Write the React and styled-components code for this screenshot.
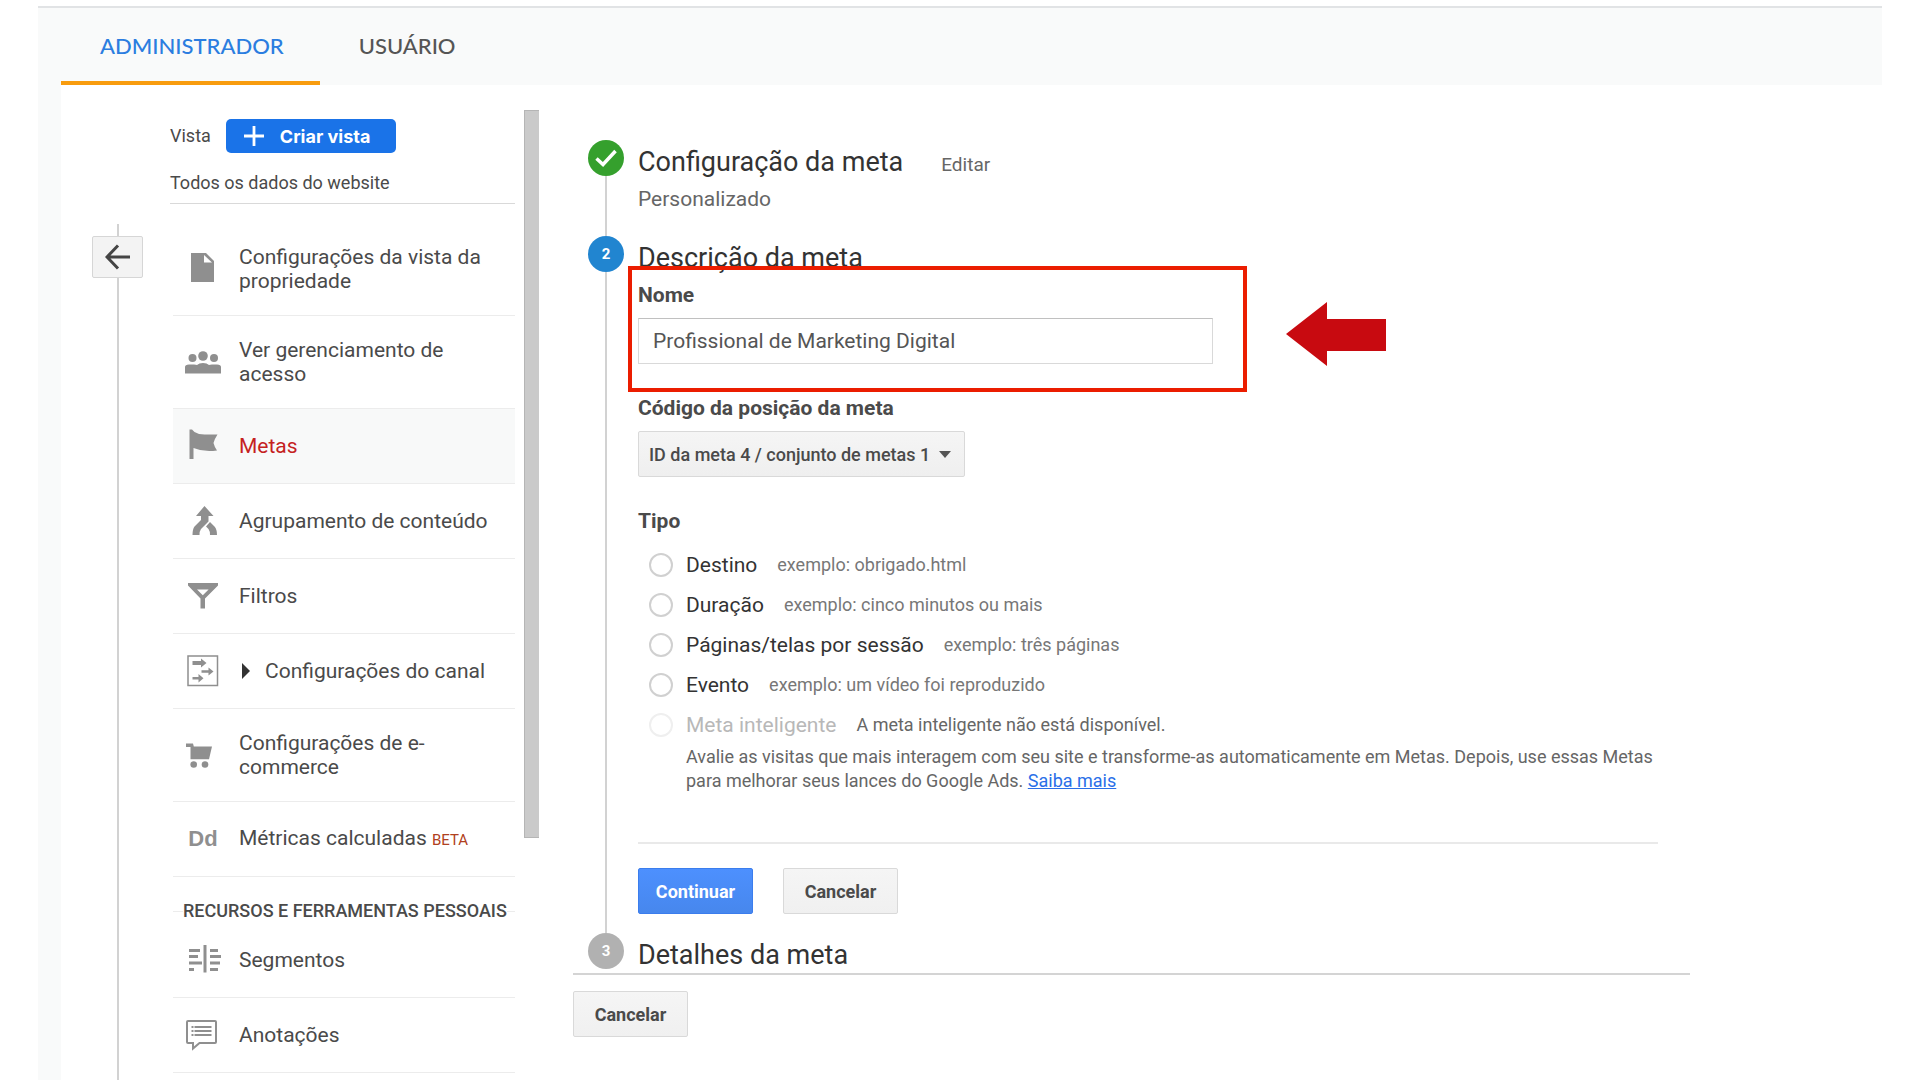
// Imports from React
import React, { useState } from "react";

// Imports for styling
import styled, { createGlobalStyle } from "styled-components";

const DocumentIcon = () => (
  <Icon viewBox="0 0 36 36" aria-hidden="true">
    <path d="M6 2h15l8 8v21H6z" />
    <path d="M19 4v7.500h8z" fill="#fff" />
  </Icon>
);

const PeopleIcon = () => (
  <Icon viewBox="0 0 36 36" aria-hidden="true">
    <circle cx="7.500" cy="14" r="4" />
    <circle cx="18" cy="12" r="4.800" />
    <circle cx="29" cy="14" r="4" />
    <path d="M0 29.500V23q0-2.500 4-2.500h5q2 0 3 .5 2-2 6-2t6 2q1-.5 3-.5h5q4 0 4 2.500v6.500z" />
  </Icon>
);

const FlagIcon = () => (
  <Icon viewBox="0 0 36 36" aria-hidden="true">
    <path d="M4.500 1.500h2.500l2.500 2.500q4 2.500 10 2.500h13q-3 4.500-4 8.500 1 4 3.500 7.500-13 2-23.500-2.500V31H4.500z" />
  </Icon>
);

const MergeIcon = () => (
  <Icon viewBox="0 0 36 36" aria-hidden="true">
    <path d="M19.500 3l9 10h-5v5.500L16 26q-1.500 2-1.500 6H7.500q0-6 2-8.500L16 17v-4h-5z" />
    <path d="M25 19l4.500 4.500Q32 26 32 32h-7q0-4-1.500-6l-2.500-2.500z" />
  </Icon>
);

const FilterIcon = () => (
  <Icon viewBox="0 0 36 36" aria-hidden="true">
    <path
      fillRule="evenodd"
      d="M3 5h30v2.500L20 20.500V30.500h-4.500V20.500L3 7.500zM12 11.500l5.800 5.800 5.800-5.800z"
    />
  </Icon>
);

const FunnelIcon = () => (
  <Icon viewBox="0 0 36 36" aria-hidden="true">
    <rect
      x="3"
      y="3"
      width="29.500"
      height="29.500"
      fill="none"
      stroke="#8f8f8f"
      strokeWidth="1.500"
    />
    <path d="M7.500 8h8.500V5.500l5.500 4.500-5.500 4.500V12H7.500z" />
    <path d="M16.500 17.200h7V14.500l5 4-5 4V19.800h-7z" />
    <path d="M7.500 24h6v-3l5 4.200-5 4.200v-3H7.500z" />
  </Icon>
);

const CartIcon = () => (
  <Icon viewBox="0 0 36 36" aria-hidden="true">
    <path d="M1 6.500h7l.8 3h18.200l-3 12.700H5.500V10H1z" />
    <circle cx="8.700" cy="27.500" r="3.300" />
    <circle cx="20" cy="27.500" r="3.300" />
  </Icon>
);

const SegmentsIcon = () => (
  <Icon viewBox="0 0 36 36" aria-hidden="true">
    <path d="M18.500 3h3v27.500h-3z" />
    <path d="M4 7h11v3H4zM4 13h9v3H4zM4 19.500h13v3H4zM4 26h5v3H4z" />
    <path d="M25 7h8v3h-8zM25 13h11v3H25zM25 19.500h10v3H25zM25 26h8v3h-8z" />
  </Icon>
);

const NoteIcon = () => (
  <Icon viewBox="0 0 36 36" aria-hidden="true">
    <path
      d="M3 4h27q1 0 1 1v20q0 1-1 1H14.500L8 31.500V26H3q-1 0-1-1V5q0-1 1-1z"
      fill="none"
      stroke="#8f8f8f"
      strokeWidth="2"
    />
    <path d="M6.500 9h2v2h-2zM6.500 13h2v2h-2zM6.500 17h2v2h-2z" />
    <path d="M9.500 9h17v2h-17zM9.500 13h17v2h-17zM9.500 17h17v2h-17z" />
  </Icon>
);

const MetricsIcon = () => <LetterIcon>Dd</LetterIcon>;

const viewItems = [
  { label: "Configurações da vista da propriedade", Glyph: DocumentIcon },
  { label: "Ver gerenciamento de acesso", Glyph: PeopleIcon },
  { label: "Metas", Glyph: FlagIcon, active: true },
  { label: "Agrupamento de conteúdo", Glyph: MergeIcon },
  { label: "Filtros", Glyph: FilterIcon },
  { label: "Configurações do canal", Glyph: FunnelIcon, expandable: true },
  { label: "Configurações de e-commerce", Glyph: CartIcon },
  { label: "Métricas calculadas", Glyph: MetricsIcon, beta: true },
];

const personalItems = [
  { label: "Segmentos", Glyph: SegmentsIcon },
  { label: "Anotações", Glyph: NoteIcon },
];

const goalTypes = [
  { id: "destino", label: "Destino", hint: "exemplo: obrigado.html" },
  { id: "duracao", label: "Duração", hint: "exemplo: cinco minutos ou mais" },
  {
    id: "paginas",
    label: "Páginas/telas por sessão",
    hint: "exemplo: três páginas",
  },
  {
    id: "evento",
    label: "Evento",
    hint: "exemplo: um vídeo foi reproduzido",
  },
  {
    id: "inteligente",
    label: "Meta inteligente",
    hint: "A meta inteligente não está disponível.",
    disabled: true,
  },
];

const MenuItem = ({ item }) => (
  <MenuLink href="#" $active={item.active}>
    <item.Glyph />
    {item.expandable && (
      <Expander viewBox="0 0 8 16" aria-hidden="true">
        <path d="M0 0l8 8-8 8z" />
      </Expander>
    )}
    <span>
      {item.label} {item.beta && <Beta>BETA</Beta>}
    </span>
  </MenuLink>
);

const App = () => {
  const [name, setName] = useState("Profissional de Marketing Digital");
  const [type, setType] = useState("");

  return (
    <React.Fragment>
      <GlobalStyle />
      <Page>
        <Tabs>
          <Tab href="#" $active>
            ADMINISTRADOR
          </Tab>
          <Tab href="#">USUÁRIO</Tab>
        </Tabs>
        <Content>
          <Rail>
            <RailLine $short />
            <BackButton aria-label="Voltar">
              <svg viewBox="0 0 26 26" width="26" height="26">
                <path
                  d="M25 13H2M13 1.500L2 13l11 11.500"
                  fill="none"
                  stroke="#444"
                  strokeWidth="3"
                />
              </svg>
            </BackButton>
            <RailLine />
          </Rail>

          <Sidebar>
            <ViewBar>
              <span>Vista</span>
              <CreateButton>
                <svg viewBox="0 0 20 20" width="20" height="20">
                  <path
                    d="M8.600 0h2.800v8.600H20v2.800h-8.600V20H8.600v-8.600H0V8.600h8.600z"
                    fill="#fff"
                  />
                </svg>
                Criar vista
              </CreateButton>
            </ViewBar>
            <ViewName>Todos os dados do website</ViewName>
            <Menu>
              {viewItems.map((item) => (
                <MenuItem key={item.label} item={item} />
              ))}
              <MenuHeading>
                <span>RECURSOS E FERRAMENTAS PESSOAIS</span>
              </MenuHeading>
              {personalItems.map((item) => (
                <MenuItem key={item.label} item={item} />
              ))}
            </Menu>
          </Sidebar>
          <ScrollThumb />

          <Wizard>
            <Steps>
              <Step>
                <Marker>
                  <Badge $color="#35a02d">
                    <svg viewBox="0 0 22 18" width="22" height="18">
                      <path
                        d="M1.500 9.500L8 15.500 20.500 2"
                        fill="none"
                        stroke="#fff"
                        strokeWidth="3.500"
                      />
                    </svg>
                  </Badge>
                  <MarkerLine />
                </Marker>
                <StepBody>
                  <StepTitle>
                    <h2>Configuração da meta</h2>
                    <EditLink href="#">Editar</EditLink>
                  </StepTitle>
                  <Summary>Personalizado</Summary>
                </StepBody>
              </Step>

              <Step>
                <Marker>
                  <Badge $color="#2185d0">2</Badge>
                  <MarkerLine />
                </Marker>
                <StepBody>
                  <StepTitle>
                    <h2>Descrição da meta</h2>
                  </StepTitle>
                  <NameField>
                    <FieldLabel htmlFor="goal-name">Nome</FieldLabel>
                    <TextInput
                      id="goal-name"
                      type="text"
                      value={name}
                      onChange={(e) => setName(e.target.value)}
                    />
                    <Highlight />
                    <Pointer viewBox="0 0 100 64" aria-hidden="true">
                      <path d="M0 32L41 0v17h59v32H41v15z" fill="#c80a10" />
                    </Pointer>
                  </NameField>
                  <Field>
                    <FieldLabel htmlFor="goal-slot">
                      Código da posição da meta
                    </FieldLabel>
                    <SelectWrap>
                      <Select id="goal-slot">
                        <option>ID da meta 4 / conjunto de metas 1</option>
                      </Select>
                      <Caret viewBox="0 0 12 7" aria-hidden="true">
                        <path d="M0 0h12L6 7z" />
                      </Caret>
                    </SelectWrap>
                  </Field>
                  <TypeGroup>
                    <legend>Tipo</legend>
                    {goalTypes.map((goal) => (
                      <RadioRow key={goal.id}>
                        <Radio
                          type="radio"
                          name="goal-type"
                          id={goal.id}
                          disabled={goal.disabled}
                          checked={type === goal.id}
                          onChange={() => setType(goal.id)}
                        />
                        <RadioLabel
                          htmlFor={goal.id}
                          $disabled={goal.disabled}
                        >
                          {goal.label}
                        </RadioLabel>
                        <Hint $dark={goal.disabled}>{goal.hint}</Hint>
                      </RadioRow>
                    ))}
                    <Description>
                      Avalie as visitas que mais interagem com seu site e
                      transforme-as automaticamente em Metas. Depois, use essas
                      Metas para melhorar seus lances do Google Ads.{" "}
                      <a href="#">Saiba mais</a>
                    </Description>
                  </TypeGroup>
                  <Actions>
                    <Button $primary>Continuar</Button>
                    <Button>Cancelar</Button>
                  </Actions>
                </StepBody>
              </Step>

              <Step>
                <Marker>
                  <Badge $color="#b1b1b1">3</Badge>
                </Marker>
                <StepBody>
                  <StepTitle>
                    <h2>Detalhes da meta</h2>
                  </StepTitle>
                </StepBody>
              </Step>
            </Steps>
            <Button>Cancelar</Button>
          </Wizard>
        </Content>
      </Page>
    </React.Fragment>
  );
};

// Styled components
const GlobalStyle = createGlobalStyle`
  * {
    box-sizing: border-box;
  }
  body {
    margin: 0;
    background: #fff;
    color: #4a4a4a;
    font-family: Roboto, sans-serif;
    font-size: 18px;
    line-height: 24px;
  }
  h2, p {
    margin: 0;
  }
  a {
    text-decoration: none;
  }
  button, input, select {
    font-family: inherit;
  }
`;

const Page = styled.div`
  display: flex;
  flex-direction: column;
  min-height: 100vh;
  padding: 6px 38px 0;
`;

const Tabs = styled.nav`
  display: flex;
  height: 79px;
  padding-left: 23px;
  background: #f9fafa;
  border-top: 2px solid #e1e3e5;
`;

const Tab = styled.a`
  padding: 26px 36px 0 39px;
  font-family: Lato, sans-serif;
  font-size: 22px;
  font-weight: 500;
  color: ${(props) => (props.$active ? "#2b7de0" : "#555")};
  border-bottom: 4px solid
    ${(props) => (props.$active ? "#f89c0e" : "transparent")};
`;

const Content = styled.div`
  display: flex;
  flex: 1;
  border-left: 23px solid #f9fafa;
`;

const Rail = styled.div`
  display: flex;
  flex-direction: column;
  align-items: center;
  width: 51px;
  margin: 139px 27px 0 31px;
`;

const RailLine = styled.div`
  width: 2px;
  background: #d2d2d2;
  ${(props) => (props.$short ? "height: 12px;" : "flex: 1;")}
`;

const BackButton = styled.button`
  display: flex;
  align-items: center;
  justify-content: center;
  width: 51px;
  height: 42px;
  padding: 0;
  background: #f3f3f3;
  border: 1px solid #d6d6d6;
  border-radius: 2px;
`;

const Sidebar = styled.aside`
  width: 345px;
  padding-top: 34px;
`;

const ViewBar = styled.div`
  display: flex;
  align-items: center;
  gap: 15px;
`;

const CreateButton = styled.button`
  display: flex;
  align-items: center;
  gap: 16px;
  width: 170px;
  height: 34px;
  padding: 0 18px;
  background: #1a73e8;
  border: 0;
  border-radius: 5px;
  color: #fff;
  font-family: Inter, sans-serif;
  font-size: 18px;
  font-weight: 700;
  white-space: nowrap;
`;

const ViewName = styled.p`
  padding: 18px 0 8px;
  border-bottom: 1px solid #d9d9d9;
`;

const Menu = styled.nav`
  margin: 19px 0 0 3px;
`;

const MenuLink = styled.a`
  display: flex;
  align-items: center;
  gap: 18px;
  min-height: 75px;
  padding: 22px 12px;
  color: ${(props) => (props.$active ? "#c5221f" : "#4a4a4a")};
  background: ${(props) => (props.$active ? "#f8f9f9" : "transparent")};
  border-bottom: 1px solid #ececec;
  font-size: 21px;
`;

const Icon = styled.svg`
  flex: none;
  width: 36px;
  height: 36px;
  margin: -3px 0;
  fill: #8f8f8f;
`;

const LetterIcon = styled.span`
  flex: none;
  width: 36px;
  color: #8f8f8f;
  font-family: "Liberation Sans", sans-serif;
  font-size: 22px;
  font-weight: bold;
  text-align: center;
`;

const Expander = styled.svg`
  flex: none;
  width: 8px;
  height: 16px;
  margin: 0 -3px 0 3px;
  fill: #333;
`;

const Beta = styled.small`
  color: #b04020;
  font-size: 15px;
`;

const MenuHeading = styled.div`
  display: flex;
  align-items: center;
  height: 46px;
  padding-top: 22px;
  font-size: 18px;
  font-weight: 500;
  white-space: nowrap;
  &::before,
  &::after {
    content: "";
    width: 10px;
    height: 1px;
    background: #ececec;
  }
  &::after {
    flex: 1;
  }
`;

const ScrollThumb = styled.div`
  flex: none;
  width: 15px;
  height: 728px;
  margin: 25px 34px 0 9px;
  background: #cacaca;
  border: solid #b5b5b5;
  border-width: 1px 0 1px 1px;
`;

const Wizard = styled.main`
  flex: 1;
  margin-right: 10vw;
  padding-top: 55px;
`;

const Steps = styled.div`
  margin-bottom: 16px;
  border-bottom: 2px solid #d4d4d4;
`;

const Step = styled.section`
  display: flex;
  gap: 14px;
  padding-left: 15px;
`;

const Marker = styled.div`
  display: flex;
  flex-direction: column;
  align-items: center;
  width: 36px;
`;

const MarkerLine = styled.div`
  flex: 1;
  width: 2px;
  background: #d2d2d2;
`;

const Badge = styled.div`
  display: flex;
  align-items: center;
  justify-content: center;
  width: 36px;
  height: 36px;
  background: ${(props) => props.$color};
  border-radius: 50%;
  color: #fff;
  font-size: 15px;
  font-weight: 700;
`;

const StepBody = styled.div`
  flex: 1;
  padding: 6px 32px 2px 0;
`;

const StepTitle = styled.div`
  display: flex;
  align-items: baseline;
  gap: 38px;
  color: #333;
  h2 {
    font-size: 27px;
    font-weight: 400;
    line-height: 32px;
  }
`;

const EditLink = styled.a`
  color: #666;
  font-size: 19px;
`;

const Summary = styled.p`
  padding: 9px 0 23px;
  color: #666;
  font-size: 21px;
`;

const Field = styled.div`
  max-width: 575px;
  margin-bottom: 32px;
`;

const NameField = styled(Field)`
  position: relative;
  margin-top: 9px;
`;

const FieldLabel = styled.label`
  display: block;
  margin-bottom: 11px;
  font-size: 21px;
  font-weight: 700;
`;

const TextInput = styled.input`
  display: block;
  width: 100%;
  height: 46px;
  padding: 0 14px;
  border: 1px solid #d9d9d9;
  border-top-color: #c0c0c0;
  color: #555;
  font-size: 21px;
`;

const Highlight = styled.div`
  position: absolute;
  inset: -17px -34px -28px -10px;
  border: 4px solid #eb1d00;
  pointer-events: none;
`;

const Pointer = styled.svg`
  position: absolute;
  top: 19px;
  left: calc(100% + 73px);
  width: 100px;
  height: 64px;
`;

const SelectWrap = styled.div`
  display: inline-grid;
  align-items: center;
  vertical-align: top;
`;

const Select = styled.select`
  grid-area: 1 / 1;
  width: 327px;
  height: 46px;
  padding: 0 10px;
  appearance: none;
  background: linear-gradient(#f5f5f5, #efefef);
  border: 1px solid #d9d9d9;
  border-radius: 2px;
  color: #4a4a4a;
  font-size: 18px;
  font-weight: 500;
`;

const Caret = styled.svg`
  grid-area: 1 / 1;
  justify-self: end;
  width: 12px;
  height: 7px;
  margin-right: 14px;
  fill: #555;
  pointer-events: none;
`;

const TypeGroup = styled.fieldset`
  margin: 0;
  padding: 0;
  border: 0;
  legend {
    padding: 0;
    margin-bottom: 12px;
    font-size: 21px;
    font-weight: 700;
  }
`;

const RadioRow = styled.div`
  display: flex;
  align-items: center;
  height: 40px;
  padding-left: 11px;
`;

const Radio = styled.input`
  width: 24px;
  height: 24px;
  margin: 0 13px 0 0;
  appearance: none;
  border: 2px solid #d0d0d0;
  border-radius: 50%;
  &:checked {
    border-width: 7px;
    border-color: #2185d0;
  }
  &:disabled {
    border-color: #efefef;
  }
`;

const RadioLabel = styled.label`
  margin-right: 20px;
  color: ${(props) => (props.$disabled ? "#b8b8b8" : "#333")};
  font-size: 21px;
`;

const Hint = styled.span`
  color: ${(props) => (props.$dark ? "#666" : "#777")};
`;

const Description = styled.p`
  padding-left: 48px;
  color: #666;
  a {
    color: #2a6fe8;
    text-decoration: underline;
  }
`;

const Actions = styled.div`
  display: flex;
  gap: 30px;
  margin-top: 49px;
  padding: 24px 0 17px;
  border-top: 2px solid #e9e9e9;
`;

const Button = styled.button`
  width: 115px;
  height: 46px;
  padding: 0;
  background: ${(props) =>
    props.$primary
      ? "linear-gradient(#4d90fe, #4787ed)"
      : "linear-gradient(#f5f5f5, #f0f0f0)"};
  border: 1px solid ${(props) => (props.$primary ? "#3b7ded" : "#d9d9d9")};
  border-radius: 2px;
  color: ${(props) => (props.$primary ? "#fff" : "#4a4a4a")};
  font-size: 18px;
  font-weight: 700;
`;

export default App;
